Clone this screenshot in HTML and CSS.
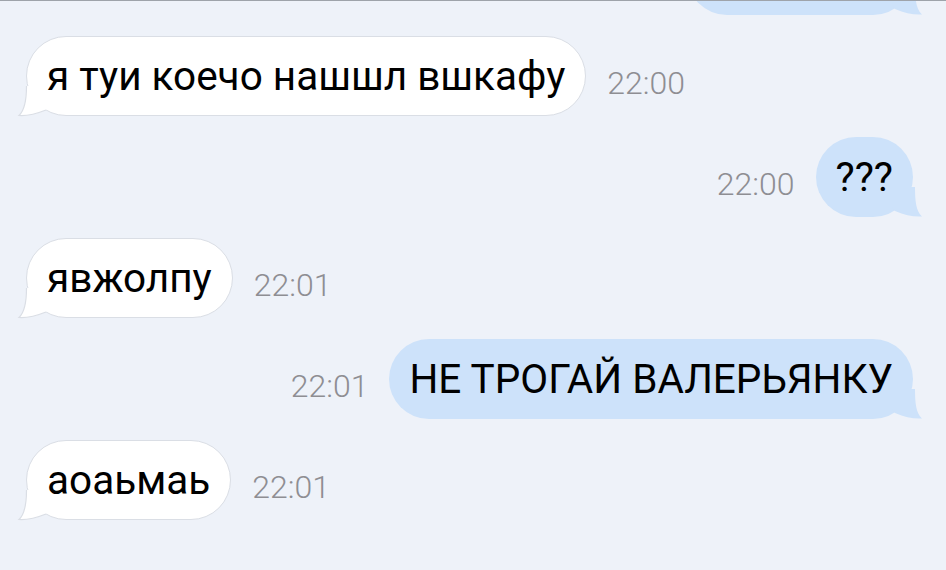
FILE: index.html
```html
<!DOCTYPE html>
<html lang="ru">
<head>
    <meta charset="UTF-8">
    <meta name="viewport" content="width=device-width, initial-scale=1.0">
    <title>Чат</title>
    <link rel="stylesheet" href="styles.css">
</head>
<body>
    <div class="chat">
        <div class="row out first">
            <div class="bubble wide">
                <svg class="tail" viewBox="0 0 30 30"><path class="tail-fill" d="M7 0 C7 14 6 24 0 29.5 C9 30 17 28 27 24 L30 20 L30 0 Z"/></svg>
                <span class="text">&nbsp;</span>
            </div>
        </div>
        <div class="row in">
            <div class="bubble">
                <svg class="tail" viewBox="0 0 30 30"><path class="tail-fill" d="M7 0 C7 14 6 24 0 29.5 C9 30 17 28 27 24 L30 20 L30 0 Z"/><path class="tail-line" d="M7.5 0 C7.5 14 6 24 0 29.5 C9 30 17 28 27 24"/></svg>
                <span class="text">я туи коечо нашшл вшкафу</span>
            </div>
            <span class="time">22:00</span>
        </div>
        <div class="row out">
            <span class="time">22:00</span>
            <div class="bubble">
                <svg class="tail" viewBox="0 0 30 30"><path class="tail-fill" d="M7 0 C7 14 6 24 0 29.5 C9 30 17 28 27 24 L30 20 L30 0 Z"/></svg>
                <span class="text">???</span>
            </div>
        </div>
        <div class="row in">
            <div class="bubble">
                <svg class="tail" viewBox="0 0 30 30"><path class="tail-fill" d="M7 0 C7 14 6 24 0 29.5 C9 30 17 28 27 24 L30 20 L30 0 Z"/><path class="tail-line" d="M7.5 0 C7.5 14 6 24 0 29.5 C9 30 17 28 27 24"/></svg>
                <span class="text">явжолпу</span>
            </div>
            <span class="time">22:01</span>
        </div>
        <div class="row out">
            <span class="time">22:01</span>
            <div class="bubble">
                <svg class="tail" viewBox="0 0 30 30"><path class="tail-fill" d="M7 0 C7 14 6 24 0 29.5 C9 30 17 28 27 24 L30 20 L30 0 Z"/></svg>
                <span class="text">НЕ ТРОГАЙ ВАЛЕРЬЯНКУ</span>
            </div>
        </div>
        <div class="row in">
            <div class="bubble">
                <svg class="tail" viewBox="0 0 30 30"><path class="tail-fill" d="M7 0 C7 14 6 24 0 29.5 C9 30 17 28 27 24 L30 20 L30 0 Z"/><path class="tail-line" d="M7.5 0 C7.5 14 6 24 0 29.5 C9 30 17 28 27 24"/></svg>
                <span class="text">аоаьмаь</span>
            </div>
            <span class="time">22:01</span>
        </div>
    </div>
</body>
</html>
```

FILE: styles.css
```css
*{
    margin: 0;
    padding: 0;
    box-sizing: border-box;
}
html, body{
    height: 100%;
    overflow: hidden;
}
body{
    background: #eef2f9;
    border-top: 1px solid #9ea3aa;
    font-family: Roboto, "Liberation Sans", sans-serif;
}
.chat{
    display: flex;
    flex-direction: column;
    gap: 21px;
    padding: 0 33px 0 26px;
}
.row{
    display: flex;
    align-items: center;
    gap: 21px;
}
.row.out{
    justify-content: flex-end;
}
.row.first{
    margin-top: -66px;
}
.bubble{
    position: relative;
    height: 80px;
    display: flex;
    align-items: center;
    padding: 0 20px;
    border-radius: 40px;
    font-size: 40.5px;
    color: #000;
    white-space: nowrap;
}
.in .bubble{
    background: #fff;
    border: 1px solid #dadee5;
}
.out .bubble{
    background: #cde2fa;
}
.bubble.wide{
    width: 226px;
}
.text{
    position: relative;
}
.tail{
    position: absolute;
    bottom: -1px;
    left: -8px;
    width: 30px;
    height: 30px;
    overflow: visible;
}
.out .tail{
    left: auto;
    right: -9px;
    bottom: 0;
    transform: scaleX(-1);
}
.in .tail-fill{
    fill: #fff;
}
.out .tail-fill{
    fill: #cde2fa;
}
.tail-line{
    fill: none;
    stroke: #dadee5;
    stroke-width: 1.2;
}
.time{
    padding-top: 14px;
    font-size: 32px;
    font-weight: 300;
    color: #8e8e93;
}
```
